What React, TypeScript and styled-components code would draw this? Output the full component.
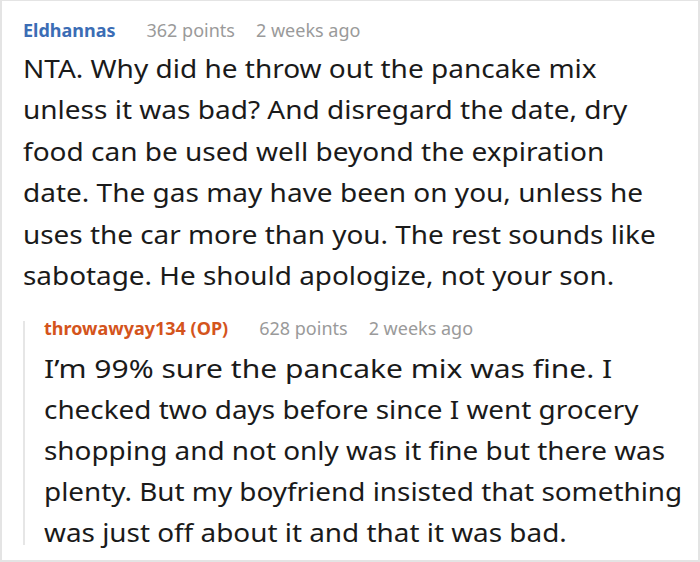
import React from "react";
import styled, { createGlobalStyle } from "styled-components";

const Global = createGlobalStyle`
  html, body { margin: 0; padding: 0; background: #ffffff; }
  body { font-family: "Noto Sans", "Open Sans", sans-serif; }
`;

const Frame = styled.div`
  box-sizing: border-box;
  width: 700px;
  height: 562px;
  border-top: 1px solid #e4e4e4;
  border-left: 2px solid #e4e4e4;
  border-right: 2px solid #e4e4e4;
  border-bottom: 2px solid #e4e4e4;
  padding: 16px 14px 0 21px;
  overflow: hidden;
`;

const Comment = styled.div`
  display: flex;
  flex-direction: column;
`;

const Header = styled.div<{ $tight?: boolean }>`
  display: flex;
  align-items: baseline;
  gap: 21px;
  font-size: 18px;
  line-height: ${(p) => (p.$tight ? "14px" : "26px")};
  white-space: nowrap;
`;

const Author = styled.span<{ $op?: boolean }>`
  font-weight: 700;
  color: ${(p) => (p.$op ? "#d4541c" : "#3b6db5")};
  margin-right: 10px;
`;

const Meta = styled.span`
  color: #9a9a9a;
`;

const Body = styled.div<{ $lh: number }>`
  margin: 0;
  font-size: 25px;
  line-height: ${(p) => p.$lh}px;
  color: #1a1a1a;
  display: flex;
  flex-direction: column;
`;

const Line = styled.span<{ $sx: number }>`
  display: block;
  white-space: nowrap;
  transform-origin: 0 50%;
  transform: scaleX(${(p) => p.$sx});
`;

const Reply = styled.div`
  margin: 24px 0 0 0;
  border-left: 2px solid #e6e6e6;
  padding-left: 19px;
  display: flex;
  flex-direction: column;
`;

const first: [string, number][] = [
  ["NTA. Why did he throw out the pancake mix", 1.12],
  ["unless it was bad? And disregard the date, dry", 1.12],
  ["food can be used well beyond the expiration", 1.12],
  ["date. The gas may have been on you, unless he", 1.12],
  ["uses the car more than you. The rest sounds like", 1.115],
  ["sabotage. He should apologize, not your son.", 1.115],
];

const reply: [string, number][] = [
  ["I’m 99% sure the pancake mix was fine. I", 1.2],
  ["checked two days before since I went grocery", 1.115],
  ["shopping and not only was it fine but there was", 1.115],
  ["plenty. But my boyfriend insisted that something", 1.115],
  ["was just off about it and that it was bad.", 1.115],
];

export default function App() {
  return (
    <>
      <Global />
      <Frame>
        <Comment>
          <Header>
            <Author>Eldhannas</Author>
            <Meta>362 points</Meta>
            <Meta>2 weeks ago</Meta>
          </Header>
          <Body $lh={41.6} style={{ marginTop: 4.5 }}>
            {first.map(([t, sx]) => (
              <Line key={t} $sx={sx}>
                {t}
              </Line>
            ))}
          </Body>
          <Reply>
            <Header $tight>
              <Author $op>throwawyay134 (OP)</Author>
              <Meta>628 points</Meta>
              <Meta>2 weeks ago</Meta>
            </Header>
            <Body $lh={41} style={{ marginTop: 12.5, marginBottom: -8 }}>
              {reply.map(([t, sx]) => (
                <Line key={t} $sx={sx}>
                  {t}
                </Line>
              ))}
            </Body>
          </Reply>
        </Comment>
      </Frame>
    </>
  );
}
